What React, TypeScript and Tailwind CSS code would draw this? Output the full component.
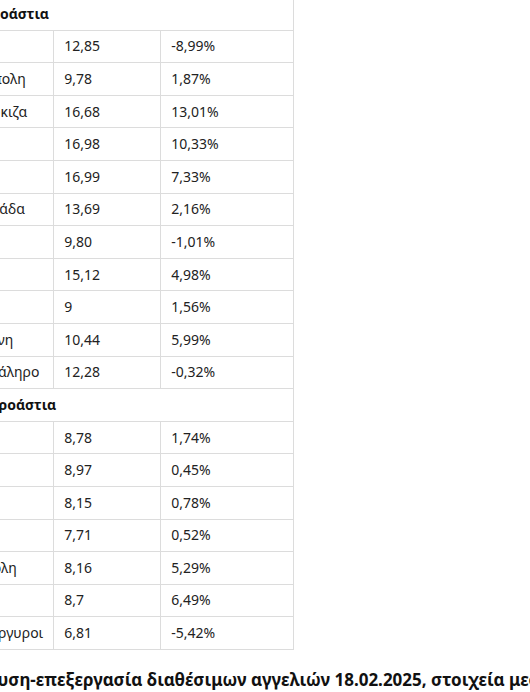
import React from "react";

type Row = { name: string; price: string; change: string } | { header: string };

const rows: Row[] = [
  { header: "Νότια Προάστια" },
  { name: "Άλιμος", price: "12,85", change: "-8,99%" },
  { name: "Αργυρούπολη", price: "9,78", change: "1,87%" },
  { name: "Βάρη-Βάρκιζα", price: "16,68", change: "13,01%" },
  { name: "Βούλα", price: "16,98", change: "10,33%" },
  { name: "Καλαμάκι", price: "16,99", change: "7,33%" },
  { name: "Άνω Γλυφάδα", price: "13,69", change: "2,16%" },
  { name: "Ελληνικό", price: "9,80", change: "-1,01%" },
  { name: "Καλλιθέα", price: "15,12", change: "4,98%" },
  { name: "Μοσχάτο", price: "9", change: "1,56%" },
  { name: "Νέα Σμύρνη", price: "10,44", change: "5,99%" },
  { name: "Παλαιό Φάληρο", price: "12,28", change: "-0,32%" },
  { header: "Δυτικά Προάστια" },
  { name: "Αιγάλεω", price: "8,78", change: "1,74%" },
  { name: "Περιστέρι", price: "8,97", change: "0,45%" },
  { name: "Καματερό", price: "8,15", change: "0,78%" },
  { name: "Ίλιον", price: "7,71", change: "0,52%" },
  { name: "Πετρούπολη", price: "8,16", change: "5,29%" },
  { name: "Ζεφύρι", price: "8,7", change: "6,49%" },
  { name: "Άγιοι Ανάργυροι", price: "6,81", change: "-5,42%" },
];

export default function App() {
  return (
    <div
      className="w-[530px] h-[692px] overflow-hidden bg-white text-[#222]"
      style={{ fontFamily: '"Noto Sans", "Open Sans", sans-serif' }}
    >
      <div className="-ml-[76px] -mt-[3px] w-[700px]">
        <table className="border-collapse text-[14px] leading-none">
          <colgroup>
            <col className="w-[125px]" />
            <col className="w-[107px]" />
            <col className="w-[133px]" />
          </colgroup>
          <tbody>
            {rows.map((r, i) =>
              "header" in r ? (
                <tr key={i} className="h-[32.6px]">
                  <td
                    colSpan={3}
                    className="border border-[#dcdcdc] px-[10px] font-bold text-[#111]"
                  >
                    {r.header}
                  </td>
                </tr>
              ) : (
                <tr key={i} className="h-[32.6px]">
                  <td className="border border-[#dcdcdc] px-[10px] whitespace-nowrap">{r.name}</td>
                  <td className="border border-[#dcdcdc] px-[10px]">{r.price}</td>
                  <td className="border border-[#dcdcdc] px-[10px]">{r.change}</td>
                </tr>
              )
            )}
          </tbody>
        </table>
        <p className="mt-[21px] -ml-[22px] text-[17px] font-bold text-[#111] whitespace-nowrap leading-none">
          Πηγή: Ανάλυση-επεξεργασία διαθέσιμων αγγελιών 18.02.2025, στοιχεία μεσαίων τιμών
        </p>
      </div>
    </div>
  );
}
